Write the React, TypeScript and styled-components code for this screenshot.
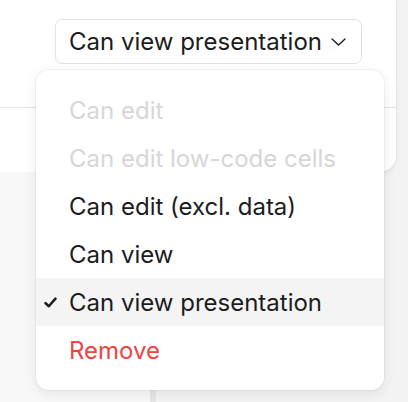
import React from "react";
import styled, { createGlobalStyle } from "styled-components";

const Global = createGlobalStyle`
  html, body { margin: 0; padding: 0; }
  body {
    background: #f3f3f3;
    font-family: Inter, "Noto Sans", sans-serif;
    -webkit-font-smoothing: antialiased;
  }
`;

const Stage = styled.div`
  position: relative;
  width: 408px;
  height: 402px;
  overflow: hidden;
`;

const Panel = styled.div`
  width: 396px;
  height: 172px;
  background: #fff;
  border-bottom-right-radius: 16px;
  box-shadow: 0 0 0 1px rgba(0, 0, 0, 0.04), 0 2px 6px rgba(0, 0, 0, 0.05);
  display: flex;
  flex-direction: column;
`;

const Header = styled.div`
  height: 108px;
  box-sizing: border-box;
  display: flex;
  justify-content: flex-end;
  align-items: flex-start;
  padding: 19px 34px 0 0;
  border-bottom: 1px solid #e4e4e4;
`;

const Lower = styled.div`
  display: flex;
  height: 230px;
`;

const Sidebar = styled.div`
  width: 150px;
  background: #f8f8f8;
  border-right: 6px solid #e5e5e5;
`;

const Trigger = styled.button`
  display: flex;
  align-items: center;
  gap: 9px;
  height: 45px;
  box-sizing: border-box;
  padding: 0 15px 0 13px;
  background: #fff;
  border: 1px solid #e3e3e3;
  border-radius: 7px;
  font-family: inherit;
  font-size: 24px;
  color: #1c1c1c;
  cursor: pointer;
`;

const Menu = styled.div`
  position: absolute;
  left: 36px;
  top: 70px;
  width: 348px;
  box-sizing: border-box;
  padding: 16px 0;
  background: #fff;
  border-radius: 13px;
  box-shadow: 0 0 0 1px rgba(0, 0, 0, 0.04), 0 4px 14px rgba(0, 0, 0, 0.08);
  display: flex;
  flex-direction: column;
`;

type Tone = "disabled" | "normal" | "danger";

const Item = styled.div<{ $tone: Tone; $active?: boolean }>`
  position: relative;
  height: 48px;
  display: flex;
  align-items: center;
  padding-left: 33px;
  font-size: 24px;
  background: ${(p) => (p.$active ? "#f4f4f4" : "transparent")};
  color: ${(p) =>
    p.$tone === "disabled" ? "#d6d6d6" : p.$tone === "danger" ? "#ef4444" : "#1c1c1c"};
`;

const Check = styled.svg`
  position: absolute;
  left: 8px;
  top: 50%;
  transform: translateY(-45%);
`;

const items: { label: string; tone: Tone; active?: boolean }[] = [
  { label: "Can edit", tone: "disabled" },
  { label: "Can edit low-code cells", tone: "disabled" },
  { label: "Can edit (excl. data)", tone: "normal" },
  { label: "Can view", tone: "normal" },
  { label: "Can view presentation", tone: "normal", active: true },
  { label: "Remove", tone: "danger" },
];

export default function App() {
  return (
    <Stage>
      <Global />
      <Panel>
        <Header>
          <Trigger>
            Can view presentation
            <svg width="15" height="8" viewBox="0 0 15 8" fill="none">
              <path d="M1 1l6.5 6L14 1" stroke="#1c1c1c" strokeWidth="1.4" strokeLinecap="round" strokeLinejoin="round" />
            </svg>
          </Trigger>
        </Header>
      </Panel>
      <Lower>
        <Sidebar />
      </Lower>
      <Menu>
        {items.map((it) => (
          <Item key={it.label} $tone={it.tone} $active={it.active}>
            {it.active && (
              <Check width="13" height="11" viewBox="0 0 13 11" fill="none">
                <path d="M1.5 6l3.3 3.2L11.5 1.6" stroke="#1c1c1c" strokeWidth="2.5" strokeLinecap="round" strokeLinejoin="round" />
              </Check>
            )}
            {it.label}
          </Item>
        ))}
      </Menu>
    </Stage>
  );
}
